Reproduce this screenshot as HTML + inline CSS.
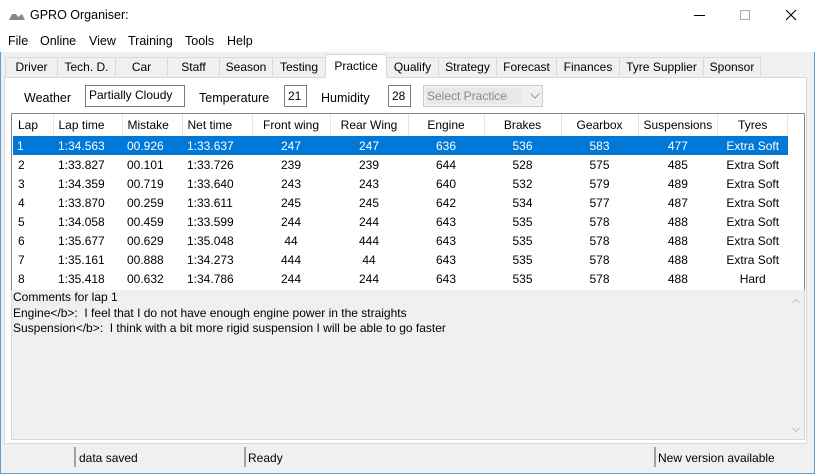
<!DOCTYPE html>
<html><head><meta charset="utf-8"><style>
*{margin:0;padding:0;box-sizing:border-box}
body{width:815px;height:474px;overflow:hidden;font-family:"Liberation Sans",sans-serif;font-size:12px;color:#000;background:#f0f0f0;position:relative}
.a{position:absolute;white-space:nowrap}
#win{position:absolute;left:0;top:0;width:815px;height:474px;border:1px solid #5aa0d8;border-top:none}
.tab{position:absolute;top:57px;height:20px;border:1px solid #d9d9d9;border-bottom:none;background:#f0f0f0;text-align:center;line-height:19px;font-size:12px}
.box{position:absolute;border:1px solid #7a7a7a;background:#fff;height:22px;line-height:20px;padding-left:3px;font-size:12px}
table{border-collapse:collapse;position:absolute;left:13px;top:114px;font-size:12px}
td{height:19px;padding:0 5px;white-space:nowrap}
th{height:22px;font-weight:normal;border-right:1px solid #e5e5e5;padding:0 5px;font-size:12px}
.c{text-align:center}
tr.sel td{background:#0078d7;color:#fff}
</style></head><body>
<div id="win"></div>
<div class="a" style="left:0;top:0;width:815px;height:52px;background:#fff"></div>
<svg class="a" style="left:8px;top:11px" width="18" height="10"><path d="M1 9 L4 3 L8 3 L10 6 L14 3 L17 9Z" fill="#888"/></svg>
<div class="a" style="left:30px;top:8px;font-size:12.5px">GPRO Organiser:</div>
<div class="a" style="left:694px;top:15px;width:11px;height:1px;background:#000"></div>
<div class="a" style="left:740px;top:10px;width:10px;height:10px;border:1px solid #aaa"></div>
<svg class="a" style="left:785px;top:9px" width="12" height="12"><path d="M1 1L11 11M11 1L1 11" stroke="#000" stroke-width="1.1"/></svg>
<div class="a" style="left:8px;top:34px;font-size:12.5px">File</div>
<div class="a" style="left:40px;top:34px;font-size:12.5px">Online</div>
<div class="a" style="left:89px;top:34px;font-size:12.5px">View</div>
<div class="a" style="left:128px;top:34px;font-size:12.5px">Training</div>
<div class="a" style="left:185px;top:34px;font-size:12.5px">Tools</div>
<div class="a" style="left:227px;top:34px;font-size:12.5px">Help</div>
<div class="a" style="left:4px;top:77px;width:803px;height:367px;border:1px solid #d9d9d9;background:#fff"></div>
<div class="tab" style="left:5px;width:53px">Driver</div>
<div class="tab" style="left:57px;width:59px">Tech. D.</div>
<div class="tab" style="left:115px;width:53px">Car</div>
<div class="tab" style="left:167px;width:53px">Staff</div>
<div class="tab" style="left:219px;width:54px">Season</div>
<div class="tab" style="left:272px;width:54px">Testing</div>
<div class="tab" style="left:325px;top:54px;height:24px;width:62px;background:#fff;line-height:23px">Practice</div>
<div class="tab" style="left:386px;width:53px">Qualify</div>
<div class="tab" style="left:438px;width:59px">Strategy</div>
<div class="tab" style="left:496px;width:61px">Forecast</div>
<div class="tab" style="left:556px;width:64px">Finances</div>
<div class="tab" style="left:619px;width:85px">Tyre Supplier</div>
<div class="tab" style="left:703px;width:58px">Sponsor</div>
<div class="a" style="left:24px;top:91px;font-size:12.5px">Weather</div>
<div class="box" style="left:85px;top:85px;width:100px;line-height:19px">Partially Cloudy</div>
<div class="a" style="left:199px;top:91px;font-size:12.5px">Temperature</div>
<div class="box" style="left:284px;top:85px;width:23px">21</div>
<div class="a" style="left:321px;top:91px;font-size:12.5px">Humidity</div>
<div class="box" style="left:388px;top:85px;width:23px">28</div>
<div class="a" style="left:423px;top:85px;width:120px;height:22px;border:1px solid #ccc;background:#f0f0f0"><div class="a" style="left:2px;top:2px;width:96px;height:16px;background:#e8e8e8;color:#8a8a8a;line-height:16px;padding-left:1px;font-size:12px">Select Practice</div><svg class="a" style="left:106px;top:7px" width="10" height="6"><path d="M0.5 0.5L5 5L9.5 0.5" stroke="#999" fill="none"/></svg></div>
<div class="a" style="left:11px;top:113px;width:794px;height:178px;border:1px solid #828790;background:#fff"></div>
<table>
<tr><th style="width:40px;text-align:left">Lap</th><th style="width:69px;text-align:left">Lap time</th><th style="width:60px;text-align:left">Mistake</th><th style="width:70px;text-align:left">Net time</th><th style="width:78px">Front wing</th><th style="width:78px">Rear Wing</th><th style="width:76px">Engine</th><th style="width:77px">Brakes</th><th style="width:77px">Gearbox</th><th style="width:77px">Suspensions</th><th style="width:70px">Tyres</th></tr>
<tr class="sel"><td style="padding-left:4px">1</td><td>1:34.563</td><td>00.926</td><td>1:33.637</td><td class="c">247</td><td class="c">247</td><td class="c">636</td><td class="c">536</td><td class="c">583</td><td class="c">477</td><td class="c">Extra Soft</td></tr>
<tr><td>2</td><td>1:33.827</td><td>00.101</td><td>1:33.726</td><td class="c">239</td><td class="c">239</td><td class="c">644</td><td class="c">528</td><td class="c">575</td><td class="c">485</td><td class="c">Extra Soft</td></tr>
<tr><td>3</td><td>1:34.359</td><td>00.719</td><td>1:33.640</td><td class="c">243</td><td class="c">243</td><td class="c">640</td><td class="c">532</td><td class="c">579</td><td class="c">489</td><td class="c">Extra Soft</td></tr>
<tr><td>4</td><td>1:33.870</td><td>00.259</td><td>1:33.611</td><td class="c">245</td><td class="c">245</td><td class="c">642</td><td class="c">534</td><td class="c">577</td><td class="c">487</td><td class="c">Extra Soft</td></tr>
<tr><td>5</td><td>1:34.058</td><td>00.459</td><td>1:33.599</td><td class="c">244</td><td class="c">244</td><td class="c">643</td><td class="c">535</td><td class="c">578</td><td class="c">488</td><td class="c">Extra Soft</td></tr>
<tr><td>6</td><td>1:35.677</td><td>00.629</td><td>1:35.048</td><td class="c">44</td><td class="c">444</td><td class="c">643</td><td class="c">535</td><td class="c">578</td><td class="c">488</td><td class="c">Extra Soft</td></tr>
<tr><td>7</td><td>1:35.161</td><td>00.888</td><td>1:34.273</td><td class="c">444</td><td class="c">44</td><td class="c">643</td><td class="c">535</td><td class="c">578</td><td class="c">488</td><td class="c">Extra Soft</td></tr>
<tr><td>8</td><td>1:35.418</td><td>00.632</td><td>1:34.786</td><td class="c">244</td><td class="c">244</td><td class="c">643</td><td class="c">535</td><td class="c">578</td><td class="c">488</td><td class="c">Hard</td></tr>
</table>
<div class="a" style="left:11px;top:290px;width:794px;height:150px;background:#f0f0f0;border:1px solid #d9d9d9;border-top:none"></div>
<svg class="a" style="left:792px;top:298px" width="8" height="6"><path d="M0.5 5L4 1.5L7.5 5" stroke="#c0c0c0" fill="none"/></svg>
<svg class="a" style="left:792px;top:427px" width="8" height="6"><path d="M0.5 1L4 4.5L7.5 1" stroke="#c0c0c0" fill="none"/></svg>
<div class="a" style="left:13px;top:290px;font-size:12px;line-height:15.5px">Comments for lap 1<br>Engine&lt;/b&gt;:&nbsp; I feel that I do not have enough engine power in the straights<br>Suspension&lt;/b&gt;:&nbsp; I think with a bit more rigid suspension I will be able to go faster</div>
<div class="a" style="left:74px;top:447px;width:2px;height:20px;background:#a0a0a0"></div>
<div class="a" style="left:79px;top:451px;font-size:12px">data saved</div>
<div class="a" style="left:244px;top:447px;width:2px;height:20px;background:#a0a0a0"></div>
<div class="a" style="left:248px;top:451px;font-size:12px">Ready</div>
<div class="a" style="left:654px;top:447px;width:2px;height:20px;background:#a0a0a0"></div>
<div class="a" style="left:658px;top:451px;font-size:12px">New version available</div>
</body></html>
